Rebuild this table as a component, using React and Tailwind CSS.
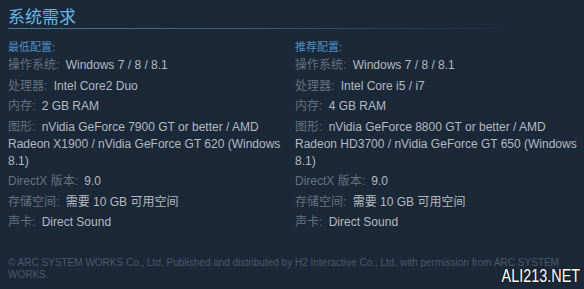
import React from 'react';

const minSpecs = [
  ['操作系统:', 'Windows 7 / 8 / 8.1'],
  ['处理器:', 'Intel Core2 Duo'],
  ['内存:', '2 GB RAM'],
  ['图形:', 'nVidia GeForce 7900 GT or better / AMD Radeon X1900 / nVidia GeForce GT 620 (Windows 8.1)'],
  ['DirectX 版本:', '9.0'],
  ['存储空间:', '需要 10 GB 可用空间'],
  ['声卡:', 'Direct Sound'],
];

const recSpecs = [
  ['操作系统:', 'Windows 7 / 8 / 8.1'],
  ['处理器:', 'Intel Core i5 / i7'],
  ['内存:', '4 GB RAM'],
  ['图形:', 'nVidia GeForce 8800 GT or better / AMD Radeon HD3700 / nVidia GeForce GT 650 (Windows 8.1)'],
  ['DirectX 版本:', '9.0'],
  ['存储空间:', '需要 10 GB 可用空间'],
  ['声卡:', 'Direct Sound'],
];

const SpecColumn = ({ title, specs, className }) => (
  <div className={className}>
    <p className="text-[11px] leading-[14px] text-[#4f8fc4]">{title}</p>
    <ul className="mt-[3px]">
      {specs.map(([label, value]) => (
        <li key={label} className="text-[12px] leading-[17px] mb-[3.5px]">
          <span className="text-[#66727f] mr-[3px]">{label}</span>{' '}
          <span className="text-[#b4bac0]">{value}</span>
        </li>
      ))}
    </ul>
  </div>
);

const App = () => {
  return (
    <div
      className="w-[584px] h-[289px] bg-[#1b2838] relative overflow-hidden"
      style={{ fontFamily: '"Liberation Sans", Arial, "Noto Sans CJK SC", sans-serif' }}
    >
      <div className="pt-[8px] pl-[8px]">
        <h2 className="text-[17px] leading-[20px] text-[#67b8e8] font-normal">系统需求</h2>
        <div className="h-px w-[510px] bg-linear-to-r from-[#4a7592] via-[#3a5a72] to-transparent"></div>

        <div className="flex mt-[11px]">
          <SpecColumn title="最低配置:" specs={minSpecs} className="w-[287px] pr-[10px]" />
          <SpecColumn title="推荐配置:" specs={recSpecs} className="w-[289px]" />
        </div>

        <p className="mt-[22px] text-[10px] leading-[12px] text-[#4c5968] pr-[24px]">
          © ARC SYSTEM WORKS Co., Ltd. Published and distributed by H2 Interactive Co., Ltd. with permission from ARC SYSTEM WORKS.
        </p>
      </div>

      {/* watermark */}
      <div className="absolute right-[4px] bottom-[3px] text-white text-[18px] leading-[20px] scale-x-80 origin-right [text-shadow:0_0_2px_#000]">
        ALI213.NET
      </div>
    </div>
  );
};

export default App;
